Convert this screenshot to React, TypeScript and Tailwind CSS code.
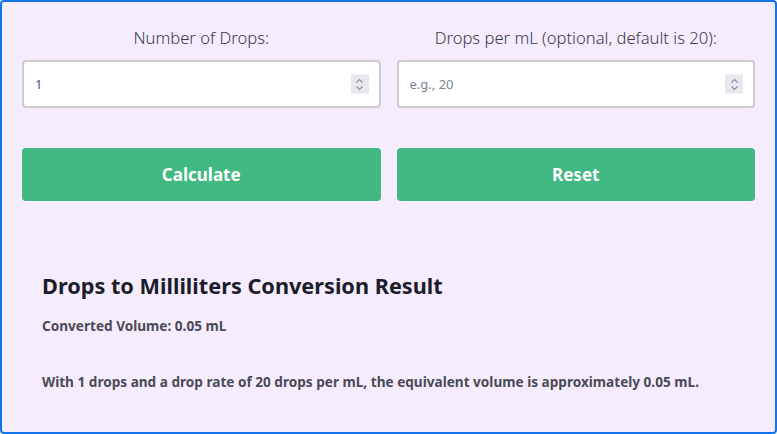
import { useState } from 'react';

function Spinner() {
  return (
    <span className="pointer-events-none absolute right-3 top-1/2 flex h-[19px] w-[18px] -translate-y-1/2 flex-col items-center justify-center bg-[#e8e8ee]">
      <svg width="9" height="14" viewBox="0 0 9 14" fill="none" stroke="#8a8a96" strokeWidth="1.1">
        <path d="M1.5 5 L4.5 2 L7.5 5" />
        <path d="M1.5 9 L4.5 12 L7.5 9" />
      </svg>
    </span>
  );
}

export default function App() {
  const [drops, setDrops] = useState('1');
  const [rate, setRate] = useState('');
  const [result, setResult] = useState<{ drops: number; rate: number; ml: number } | null>({
    drops: 1,
    rate: 20,
    ml: 0.05,
  });

  const calculate = () => {
    const d = parseFloat(drops);
    const r = parseFloat(rate) || 20;
    if (isNaN(d)) return;
    setResult({ drops: d, rate: r, ml: Math.round((d / r) * 100) / 100 });
  };

  const reset = () => {
    setDrops('');
    setRate('');
    setResult(null);
  };

  const font = { fontFamily: '"Noto Sans", "Open Sans", sans-serif' };

  return (
    <div
      className="h-[434px] w-[777px] overflow-hidden rounded-[4px] border-2 border-[#1273eb] bg-[#f5edfd] px-5 pt-6"
      style={font}
    >
      <div className="grid grid-cols-2 gap-4">
        <div className="flex flex-col">
          <label className="mb-2.5 text-center text-[16.6px] leading-6 font-light text-[#3a3a4c]">
            Number of Drops:
          </label>
          <div className="relative">
            <input
              type="text"
              value={drops}
              onChange={(e) => setDrops(e.target.value)}
              className="h-12 w-full rounded-[4px] border-2 border-[#cccccc] bg-white px-[11px] text-[13px] text-[#5a4a9e] outline-none"
            />
            <Spinner />
          </div>
        </div>
        <div className="flex flex-col">
          <label className="mb-2.5 text-center text-[16.6px] leading-6 font-light text-[#3a3a4c]">
            Drops per mL (optional, default is 20):
          </label>
          <div className="relative">
            <input
              type="text"
              value={rate}
              placeholder="e.g., 20"
              onChange={(e) => setRate(e.target.value)}
              className="h-12 w-full rounded-[4px] border-2 border-[#cccccc] bg-white px-[11px] text-[13px] text-[#5a4a9e] outline-none placeholder:text-[#7a8294]"
            />
            <Spinner />
          </div>
        </div>
      </div>

      <div className="mt-10 grid grid-cols-2 gap-4">
        <button
          onClick={calculate}
          className="h-[53px] rounded-[4px] bg-[#42b883] text-[17px] font-bold text-white"
        >
          Calculate
        </button>
        <button
          onClick={reset}
          className="h-[53px] rounded-[4px] bg-[#42b883] text-[17px] font-bold text-white"
        >
          Reset
        </button>
      </div>

      {result && (
        <div className="mt-[70px] px-5">
          <h2 className="text-[21.7px] leading-[30px] font-bold text-[#1c1c2b]">
            Drops to Milliliters Conversion Result
          </h2>
          <p className="mt-4 text-[13.6px] leading-[18px] font-bold text-[#4a4a55]">
            Converted Volume: {result.ml.toFixed(2)} mL
          </p>
          <p className="mt-[38px] text-[13.6px] leading-[18px] font-bold text-[#4a4a55]">
            With {result.drops} drops and a drop rate of {result.rate} drops per mL, the equivalent volume is
            approximately {result.ml.toFixed(2)} mL.
          </p>
        </div>
      )}
    </div>
  );
}
